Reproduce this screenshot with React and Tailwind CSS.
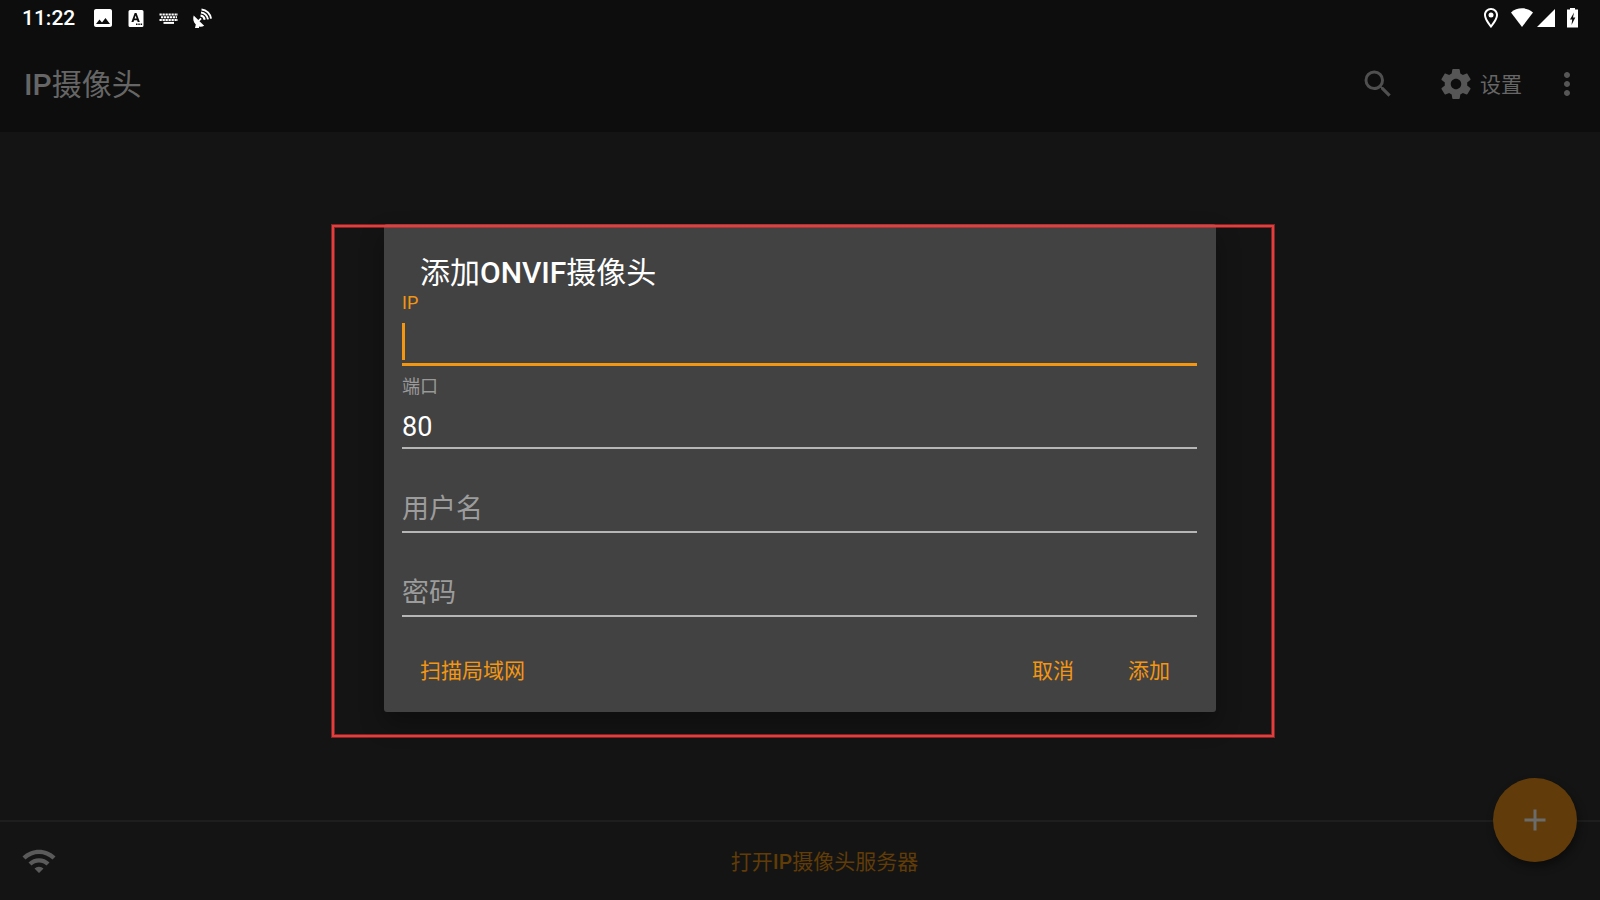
import React, { useState } from "react";
import {
  MdAdd,
  MdImage,
  MdMoreVert,
  MdOutlineLocationOn,
  MdSearch,
  MdWifi,
} from "react-icons/md";

const InputMethodIcon = () => (
  <svg className="size-6" viewBox="0 0 24 24" fill="white">
    <path
      fillRule="evenodd"
      d="M6 4h12a1.500 1.500 0 0 1 1.500 1.500v14a1.500 1.500 0 0 1-1.500 1.500h-12a1.500 1.500 0 0 1-1.500-1.500v-14a1.500 1.500 0 0 1 1.500-1.500zM10.700 7l-3.300 9h2.100l.6-1.800h3l.6 1.800h2.100l-3.300-9zM11.600 9.500l1 3h-2zM12 17.500v1.500h1.500v-1.500zM14.300 17.500v1.500h1.500v-1.500zM16.600 17.500v1.500h1.500v-1.500z"
    />
  </svg>
);

const KeyboardIcon = () => (
  <svg
    className="size-6"
    viewBox="0 0 24 24"
    fill="none"
    stroke="white"
    strokeWidth="2"
  >
    <path strokeDasharray="2.3 0.7" d="M2.500 8.500h18.500" />
    <path strokeDasharray="2.3 0.7" d="M4 11.300h16" />
    <path strokeDasharray="2.3 0.7" d="M2.500 14h18.500" />
    <path d="M6.500 16.900h10.500" />
  </svg>
);

const SatelliteIcon = () => (
  <svg className="size-6" viewBox="0 0 24 24" fill="none" stroke="white">
    <path
      fill="white"
      stroke="none"
      d="M3.700 9.500 8.300 14l2.200-2.200 1.200 1.200-2.200 2.200 4.700 4.600c-1.700 1.100-3.600 1.300-5.200.7v1.500H5l.8-3.500C3.200 16 2.700 12.500 3.700 9.500z"
    />
    <path
      strokeWidth="2"
      d="M10.500 9.500c2 .3 3.800 2 4.200 4.200M11 6.500c3.500.2 6.500 3.200 7 6.800M11.500 3.500c5 .3 9 4.300 9.500 9.200"
    />
  </svg>
);

const SettingsIcon = () => (
  <svg className="size-9 text-[#565656]" viewBox="0 0 24 24" fill="currentColor">
    <path d="M19.43 12.98c.04-.32.07-.64.07-.98s-.03-.66-.07-.98l2.11-1.65c.19-.15.24-.42.12-.64l-2-3.46c-.12-.22-.39-.3-.61-.22l-2.49 1c-.52-.4-1.08-.73-1.69-.98l-.38-2.65C14.46 2.18 14.25 2 14 2h-4c-.25 0-.46.18-.49.42l-.38 2.65c-.61.25-1.17.59-1.69.98l-2.49-1c-.23-.09-.49 0-.61.22l-2 3.46c-.13.22-.07.49.12.64l2.11 1.65c-.04.32-.07.65-.07.98s.03.66.07.98l-2.11 1.65c-.19.15-.24.42-.12.64l2 3.46c.12.22.39.3.61.22l2.49-1c.52.4 1.08.73 1.69.98l.38 2.65c.03.24.24.42.49.42h4c.25 0 .46-.18.49-.42l.38-2.65c.61-.25 1.17-.59 1.69-.98l2.49 1c.23.09.49 0 .61-.22l2-3.46c.12-.22.07-.49-.12-.64l-2.11-1.65zM12 15.5c-1.93 0-3.5-1.57-3.5-3.5s1.57-3.5 3.5-3.5 3.5 1.57 3.5 3.5-1.57 3.5-3.5 3.5z" />
  </svg>
);

const StatusBar = () => (
  <div className="flex h-9 items-center justify-between bg-[#0d0d0d] px-[22px] text-white">
    <div className="flex items-center">
      <span className="mr-4 pt-0.5 text-[21px] font-medium">11:22</span>
      <div className="flex items-center gap-[9px]">
        <MdImage className="size-6" />
        <InputMethodIcon />
        <KeyboardIcon />
        <SatelliteIcon />
      </div>
    </div>
    <div className="flex items-center">
      <MdOutlineLocationOn className="mr-2 size-6" />
      <svg className="mr-1 h-5 w-[22px]" viewBox="0 0 22 20" fill="white">
        <path d="M11 19 0 4.500C3 1.700 7 .300 11 .300S19 1.700 22 4.500z" />
      </svg>
      <svg className="mr-3 h-5 w-[18px]" viewBox="0 0 18 20" fill="white">
        <path d="M18 1v18H0z" />
      </svg>
      <svg className="h-5 w-[11px]" viewBox="0 0 11 20" fill="white">
        <path
          fillRule="evenodd"
          d="M3 0h5v1.500h3V19.500H0V1.500h3zM7 4.500 3 11.500h2.200L4.500 17 8.300 9.500H6z"
        />
      </svg>
    </div>
  </div>
);

const Field = ({ id, label, value, onChange, type = "text", focused }) => {
  const floating = focused || value !== "";

  return (
    <div className="relative h-[84px]">
      {floating ? (
        <label
          htmlFor={id}
          className={
            focused
              ? "block h-6 text-[18px] leading-[26px] text-[#f39612]"
              : "block h-6 text-[18px] leading-[26px] text-[#999999]"
          }
        >
          {label}
        </label>
      ) : (
        <div className="h-6" />
      )}
      <input
        id={id}
        type={type}
        value={value}
        aria-label={label}
        placeholder={focused ? "" : label}
        onChange={(e) => onChange(e.target.value)}
        className={
          focused
            ? "block h-[52px] w-full border-b-3 border-[#f39612] bg-transparent pt-2 text-[27px] text-white caret-transparent outline-none"
            : floating
              ? "block h-[51px] w-full border-b-2 border-[#b6b6b6] bg-transparent pt-2 text-[27px] text-white outline-none"
              : "block h-[51px] w-full border-b-2 border-[#b6b6b6] bg-transparent pt-1 text-[27px] text-white outline-none placeholder:text-[#9c9c9c]"
        }
      />
      {/* text cursor */}
      {focused && (
        <span className="absolute top-[33px] left-0 h-[37px] w-[3px] bg-[#f39612]" />
      )}
    </div>
  );
};

const AddCameraDialog = () => {
  const [ip, setIp] = useState("");
  const [port, setPort] = useState("80");
  const [user, setUser] = useState("");
  const [password, setPassword] = useState("");

  return (
    <div
      role="dialog"
      aria-labelledby="dialog-title"
      className="relative w-[52%] rounded-[3px] bg-[#424242] pt-[30px] pr-[19px] pb-[18px] pl-[18px] shadow-[0_12px_24px_rgba(0,0,0,0.3)]"
    >
      <h2
        id="dialog-title"
        className="h-9 px-[18px] text-[30px] leading-[38px] text-white"
      >
        添加<span className="font-medium">ONVIF</span>摄像头
      </h2>
      <Field id="ip" label="IP" value={ip} onChange={setIp} focused />
      <Field id="port" label="端口" value={port} onChange={setPort} />
      <Field id="user" label="用户名" value={user} onChange={setUser} />
      <Field
        id="password"
        label="密码"
        type="password"
        value={password}
        onChange={setPassword}
      />
      <div className="mt-5 flex text-[21px] text-[#f39612]">
        <button className="mr-auto h-12 px-[18px] pt-1">扫描局域网</button>
        <button className="h-12 px-[27px] pt-1">取消</button>
        <button className="h-12 px-[27px] pt-1">添加</button>
      </div>

      {/* highlight frame */}
      <div className="pointer-events-none absolute top-px -right-[58px] -bottom-[25px] -left-[52px] border-2 border-[#e63c3c] shadow-[0_0_0_1px_rgba(230,60,60,0.5),inset_0_0_0_1px_rgba(230,60,60,0.5)]" />
    </div>
  );
};

const App = () => {
  return (
    <div className="relative flex min-h-screen flex-col bg-[#141414] font-[Roboto,'Noto_Sans_CJK_SC',sans-serif]">
      <StatusBar />

      <header className="flex h-24 items-center bg-[#0d0d0d] pr-[15px] pl-6">
        <h1 className="mr-auto pt-0.5 text-[30px] leading-9 text-[#666666]">
          <span className="font-medium">IP</span>摄像头
        </h1>
        <button aria-label="搜索" className="mr-[42px]">
          <MdSearch className="size-9 text-[#4f4f4f]" />
        </button>
        <button className="mr-[27px] flex items-center gap-1.5 text-[21px] text-[#666666]">
          <SettingsIcon />
          <span className="pt-1">设置</span>
        </button>
        <button aria-label="更多">
          <MdMoreVert className="size-9 text-[#565656]" />
        </button>
      </header>

      <main className="flex-1" />

      <footer className="flex h-20 items-center border-t-2 border-[#1e1e1e] pr-2 pl-[21px]">
        <MdWifi className="size-9 text-[#5a5a5a]" />
        <button className="h-12 flex-1 pt-1 text-[21px] text-[#613c07]">
          打开<span className="font-medium">IP</span>摄像头服务器
        </button>
      </footer>

      <button
        aria-label="添加摄像头"
        className="absolute right-[23px] bottom-[38px] flex size-[84px] items-center justify-center rounded-full bg-[#613c0a] shadow-[2px_5px_8px_rgba(0,0,0,0.4)]"
      >
        <MdAdd className="size-9 text-[#6b6b6b]" />
      </button>

      <div className="absolute inset-x-0 top-9 bottom-0 flex items-center justify-center">
        <AddCameraDialog />
      </div>
    </div>
  );
};

export default App;
